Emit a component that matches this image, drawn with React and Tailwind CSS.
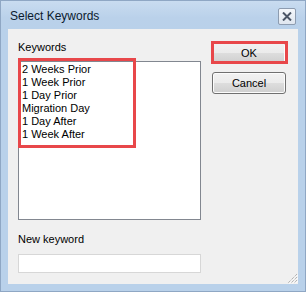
import React from "react";

const items = ["2 Weeks Prior", "1 Week Prior", "1 Day Prior", "Migration Day", "1 Day After", "1 Week After"];

function WinButton({ children }) {
  return (
    <div className="w-[74px] h-[22px] rounded-[3px] border border-[#707070] bg-[linear-gradient(to_bottom,#f2f2f2_0%,#ebebeb_50%,#dddddd_51%,#cfcfcf_100%)] flex items-center justify-center text-[11px] text-black [font-family:'Liberation_Sans',Arial,sans-serif] shadow-[inset_0_0_0_1px_#fcfcfc]">
      {children}
    </div>
  );
}

export default function App() {
  return (
    <div className="w-[306px] h-[292px] border border-[#8fa7c4] bg-[#b9d1ea] flex flex-col px-[7px] pb-[7px] [font-family:'Liberation_Sans',Arial,sans-serif]">
      {/* title bar */}
      <div className="h-[28px] flex items-center justify-between -mx-[7px] px-[9px] bg-[linear-gradient(to_bottom,#c9dcf0_0%,#bad1ea_60%,#b9d1ea_100%)]">
        <span className="text-[12px] text-[#0b1a2e] pt-[1px]">Select Keywords</span>
        <div className="w-[18px] h-[17px] mt-[3px] border border-[#8d9cb0] rounded-[2px] bg-[linear-gradient(to_bottom,#f4f7fb,#dfe6ef)] flex items-center justify-center">
          <svg width="10" height="9" viewBox="0 0 10 9">
            <path d="M1 0.5 L9 8.5 M9 0.5 L1 8.5" stroke="#4a5566" strokeWidth="2" />
          </svg>
        </div>
      </div>
      {/* client */}
      <div className="relative flex-1 bg-[#f0f0f0] flex flex-row">
        <div className="ml-[10px] w-[183px] flex flex-col">
          <div className="mt-[12px] h-[13px] leading-[13px] text-[11px] text-black">Keywords</div>
          <div className="relative mt-[7px] h-[159px] border border-[#828790] bg-white pt-[1px] pl-[3px]">
            {items.map((t) => (
              <div key={t} className="h-[13px] leading-[13px] text-[11px] text-black whitespace-nowrap">{t}</div>
            ))}
            <div className="absolute left-[-1px] top-[-4px] w-[118px] h-[90px] border-[3px] border-[#e8474a]" />
          </div>
          <div className="mt-[13px] h-[13px] leading-[13px] text-[11px] text-black">New keyword</div>
          <div className="mt-[8px] h-[19px] border border-[#d7d7d7] bg-white" />
        </div>
        <div className="ml-[11px] flex flex-col">
          <div className="relative mt-[13px]">
            <WinButton>OK</WinButton>
            <div className="absolute left-[-1px] top-[-1px] w-[77px] h-[23px] border-[3px] border-[#e8474a]" />
          </div>
          <div className="mt-[8px]">
            <WinButton>Cancel</WinButton>
          </div>
        </div>
        <svg className="absolute right-0 bottom-0" width="11" height="11" viewBox="0 0 11 11">
          <path d="M10 1 L1 10 M10 4 L4 10 M10 7 L7 10" stroke="#9a9a9a" strokeWidth="1" strokeDasharray="1 1" />
          <path d="M11 2 L2 11 M11 5 L5 11 M11 8 L8 11" stroke="#ffffff" strokeWidth="1" strokeDasharray="1 1" />
        </svg>
      </div>
    </div>
  );
}
